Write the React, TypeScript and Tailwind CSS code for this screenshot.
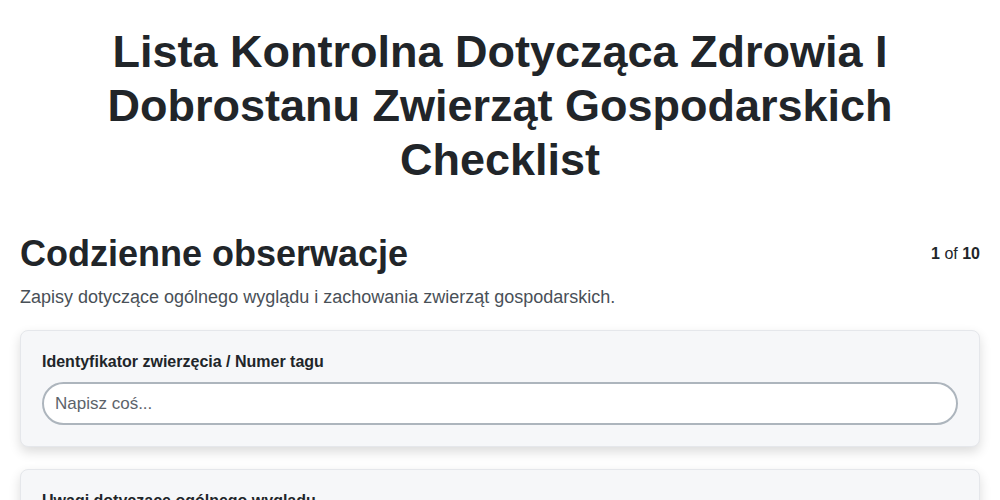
export default function App() {
  return (
    <div className="min-h-screen bg-white text-[#212529]" style={{ fontFamily: '"Liberation Sans", Arial, sans-serif' }}>
      <div className="px-5 pt-[25px]">
        <h1 className="mx-auto max-w-[820px] text-center text-[45px] font-bold leading-[54px]">
          Lista Kontrolna Dotycząca Zdrowia I Dobrostanu Zwierząt Gospodarskich Checklist
        </h1>

        <div className="mt-[45px] flex items-start justify-between">
          <h2 className="text-[36px] font-bold leading-[44px]">Codzienne obserwacje</h2>
          <div className="pt-[10px] text-[16px]">
            <span className="font-bold">1</span> of <span className="font-bold">10</span>
          </div>
        </div>
        <p className="mt-[8px] text-[18px] leading-[27px] text-[#495057]">
          Zapisy dotyczące ogólnego wyglądu i zachowania zwierząt gospodarskich.
        </p>

        <div className="mt-[19px] flex flex-col gap-[22px]">
          <div className="rounded-lg border border-[#e5e7eb] bg-[#f6f7f9] px-[21px] pb-[21px] pt-[19px] shadow-[0_5px_12px_rgba(0,0,0,0.14)]">
            <label className="block text-[16px] font-bold leading-[24px]">Identyfikator zwierzęcia / Numer tagu</label>
            <input
              type="text"
              placeholder="Napisz coś..."
              className="mt-[8px] h-[43px] w-full rounded-full border-2 border-[#adb5bd] bg-white px-[11px] text-[17px] text-[#212529] placeholder:text-[#5c636a] outline-none"
            />
          </div>
          <div className="rounded-lg border border-[#e5e7eb] bg-[#f6f7f9] px-[21px] pb-[21px] pt-[19px] shadow-[0_5px_12px_rgba(0,0,0,0.14)]">
            <label className="block text-[16px] font-bold leading-[24px]">Uwagi dotyczące ogólnego wyglądu</label>
            <textarea
              placeholder="Napisz coś..."
              className="mt-[8px] h-[80px] w-full rounded-lg border-2 border-[#adb5bd] bg-white px-[11px] py-2 text-[17px] outline-none"
            />
          </div>
        </div>
      </div>
    </div>
  );
}
